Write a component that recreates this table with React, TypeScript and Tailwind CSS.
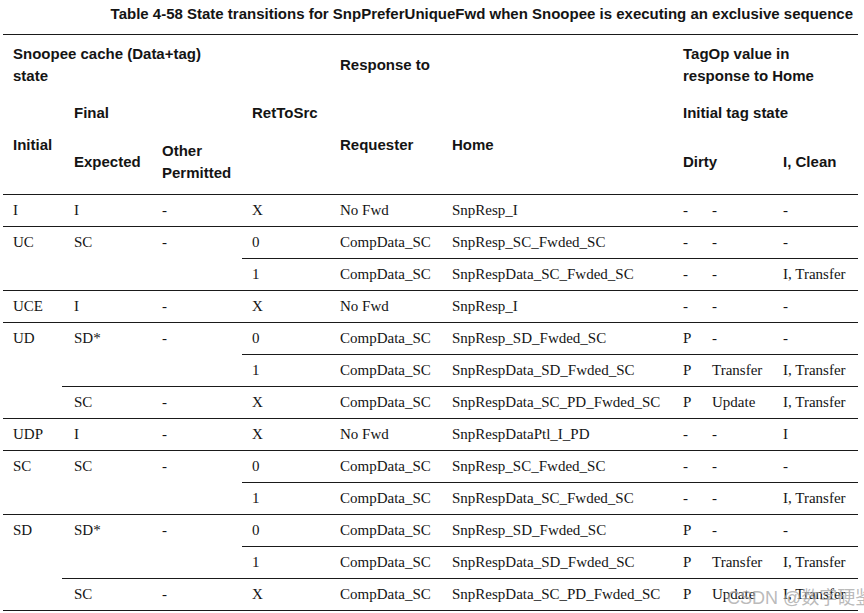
import React from "react";

type Sub = {
  ret: string;
  req: string;
  home: string;
  dirty: string;
  dirtyOp: string;
  clean: string;
};

type Group = { final: string; other: string; subs: Sub[] };

type Block = { initial: string; groups: Group[] };

const s = (
  ret: string,
  req: string,
  home: string,
  dirty: string,
  dirtyOp: string,
  clean: string
): Sub => ({ ret, req, home, dirty, dirtyOp, clean });

const blocks: Block[] = [
  {
    initial: "I",
    groups: [{ final: "I", other: "-", subs: [s("X", "No Fwd", "SnpResp_I", "-", "-", "-")] }],
  },
  {
    initial: "UC",
    groups: [
      {
        final: "SC",
        other: "-",
        subs: [
          s("0", "CompData_SC", "SnpResp_SC_Fwded_SC", "-", "-", "-"),
          s("1", "CompData_SC", "SnpRespData_SC_Fwded_SC", "-", "-", "I, Transfer"),
        ],
      },
    ],
  },
  {
    initial: "UCE",
    groups: [{ final: "I", other: "-", subs: [s("X", "No Fwd", "SnpResp_I", "-", "-", "-")] }],
  },
  {
    initial: "UD",
    groups: [
      {
        final: "SD*",
        other: "-",
        subs: [
          s("0", "CompData_SC", "SnpResp_SD_Fwded_SC", "P", "-", "-"),
          s("1", "CompData_SC", "SnpRespData_SD_Fwded_SC", "P", "Transfer", "I, Transfer"),
        ],
      },
      {
        final: "SC",
        other: "-",
        subs: [s("X", "CompData_SC", "SnpRespData_SC_PD_Fwded_SC", "P", "Update", "I, Transfer")],
      },
    ],
  },
  {
    initial: "UDP",
    groups: [
      { final: "I", other: "-", subs: [s("X", "No Fwd", "SnpRespDataPtl_I_PD", "-", "-", "I")] },
    ],
  },
  {
    initial: "SC",
    groups: [
      {
        final: "SC",
        other: "-",
        subs: [
          s("0", "CompData_SC", "SnpResp_SC_Fwded_SC", "-", "-", "-"),
          s("1", "CompData_SC", "SnpRespData_SC_Fwded_SC", "-", "-", "I, Transfer"),
        ],
      },
    ],
  },
  {
    initial: "SD",
    groups: [
      {
        final: "SD*",
        other: "-",
        subs: [
          s("0", "CompData_SC", "SnpResp_SD_Fwded_SC", "P", "-", "-"),
          s("1", "CompData_SC", "SnpRespData_SD_Fwded_SC", "P", "Transfer", "I, Transfer"),
        ],
      },
      {
        final: "SC",
        other: "-",
        subs: [s("X", "CompData_SC", "SnpRespData_SC_PD_Fwded_SC", "P", "Update", "I, Transfer")],
      },
    ],
  },
];

const th = "pl-[10px] text-left align-middle font-bold";
const td = "pl-[10px] h-[32px] align-top leading-[31px] border-t border-[#1a1a1a] whitespace-nowrap";

export default function App() {
  return (
    <div className="relative w-[864px] h-[613px] bg-white text-[#141414] overflow-hidden">
      {/* Caption */}
      <div className="h-[34px] pt-[4px] pr-[11px] text-right text-[15px] leading-[20px] font-bold whitespace-nowrap font-['Liberation_Sans',Arial,sans-serif]">
        Table 4-58 State transitions for SnpPreferUniqueFwd when Snoopee is executing an exclusive sequence
      </div>

      <table className="ml-[3px] w-[855px] table-fixed border-collapse">
        <colgroup>
          <col className="w-[59px]" />
          <col className="w-[90px]" />
          <col className="w-[90px]" />
          <col className="w-[88px]" />
          <col className="w-[112px]" />
          <col className="w-[231px]" />
          <col className="w-[29px]" />
          <col className="w-[71px]" />
          <col className="w-[85px]" />
        </colgroup>

        {/* Header */}
        <thead className="text-[15px] leading-[22px] font-['Liberation_Sans',Arial,sans-serif] border-t border-b border-[#1a1a1a]">
          <tr className="h-[61px]">
            <th colSpan={3} className={th}>
              Snoopee cache (Data+tag)
              <br />
              state
            </th>
            <th className={th}></th>
            <th colSpan={2} className={th}>
              Response to
            </th>
            <th colSpan={3} className={th}>
              TagOp value in
              <br />
              response to Home
            </th>
          </tr>
          <tr className="h-[35px]">
            <th rowSpan={2} className={th}>
              Initial
            </th>
            <th colSpan={2} className={`${th} pl-[12px]`}>
              Final
            </th>
            <th className={th}>RetToSrc</th>
            <th rowSpan={2} className={th}>
              Requester
            </th>
            <th rowSpan={2} className={th}>
              Home
            </th>
            <th colSpan={3} className={th}>
              Initial tag state
            </th>
          </tr>
          <tr className="h-[64px]">
            <th className={`${th} pl-[12px]`}>Expected</th>
            <th className={th}>
              Other
              <br />
              Permitted
            </th>
            <th className={th}></th>
            <th colSpan={2} className={th}>
              Dirty
            </th>
            <th className={th}>I, Clean</th>
          </tr>
        </thead>

        {/* Body */}
        <tbody className="text-[15px] font-['Liberation_Serif','Times_New_Roman',serif] border-b border-[#1a1a1a]">
          {blocks.map((b) => {
            const total = b.groups.reduce((n, g) => n + g.subs.length, 0);
            return b.groups.map((g, gi) =>
              g.subs.map((sub, si) => (
                <tr key={`${b.initial}-${gi}-${si}`}>
                  {gi === 0 && si === 0 && (
                    <td rowSpan={total} className={td}>
                      {b.initial}
                    </td>
                  )}
                  {si === 0 && (
                    <>
                      <td rowSpan={g.subs.length} className={`${td} pl-[12px]`}>
                        {g.final}
                      </td>
                      <td rowSpan={g.subs.length} className={td}>
                        {g.other}
                      </td>
                    </>
                  )}
                  <td className={td}>{sub.ret}</td>
                  <td className={td}>{sub.req}</td>
                  <td className={td}>{sub.home}</td>
                  <td className={td}>{sub.dirty}</td>
                  <td className={td}>{sub.dirtyOp}</td>
                  <td className={td}>{sub.clean}</td>
                </tr>
              ))
            );
          })}
        </tbody>
      </table>

      {/* Watermark */}
      <div className="absolute left-[727px] top-[587px] text-[18px] leading-[22px] whitespace-nowrap text-[#a8a8a8]/80 font-['Liberation_Sans','Noto_Sans_CJK_SC',sans-serif]">
        CSDN @数字硬鉴
      </div>
    </div>
  );
}
